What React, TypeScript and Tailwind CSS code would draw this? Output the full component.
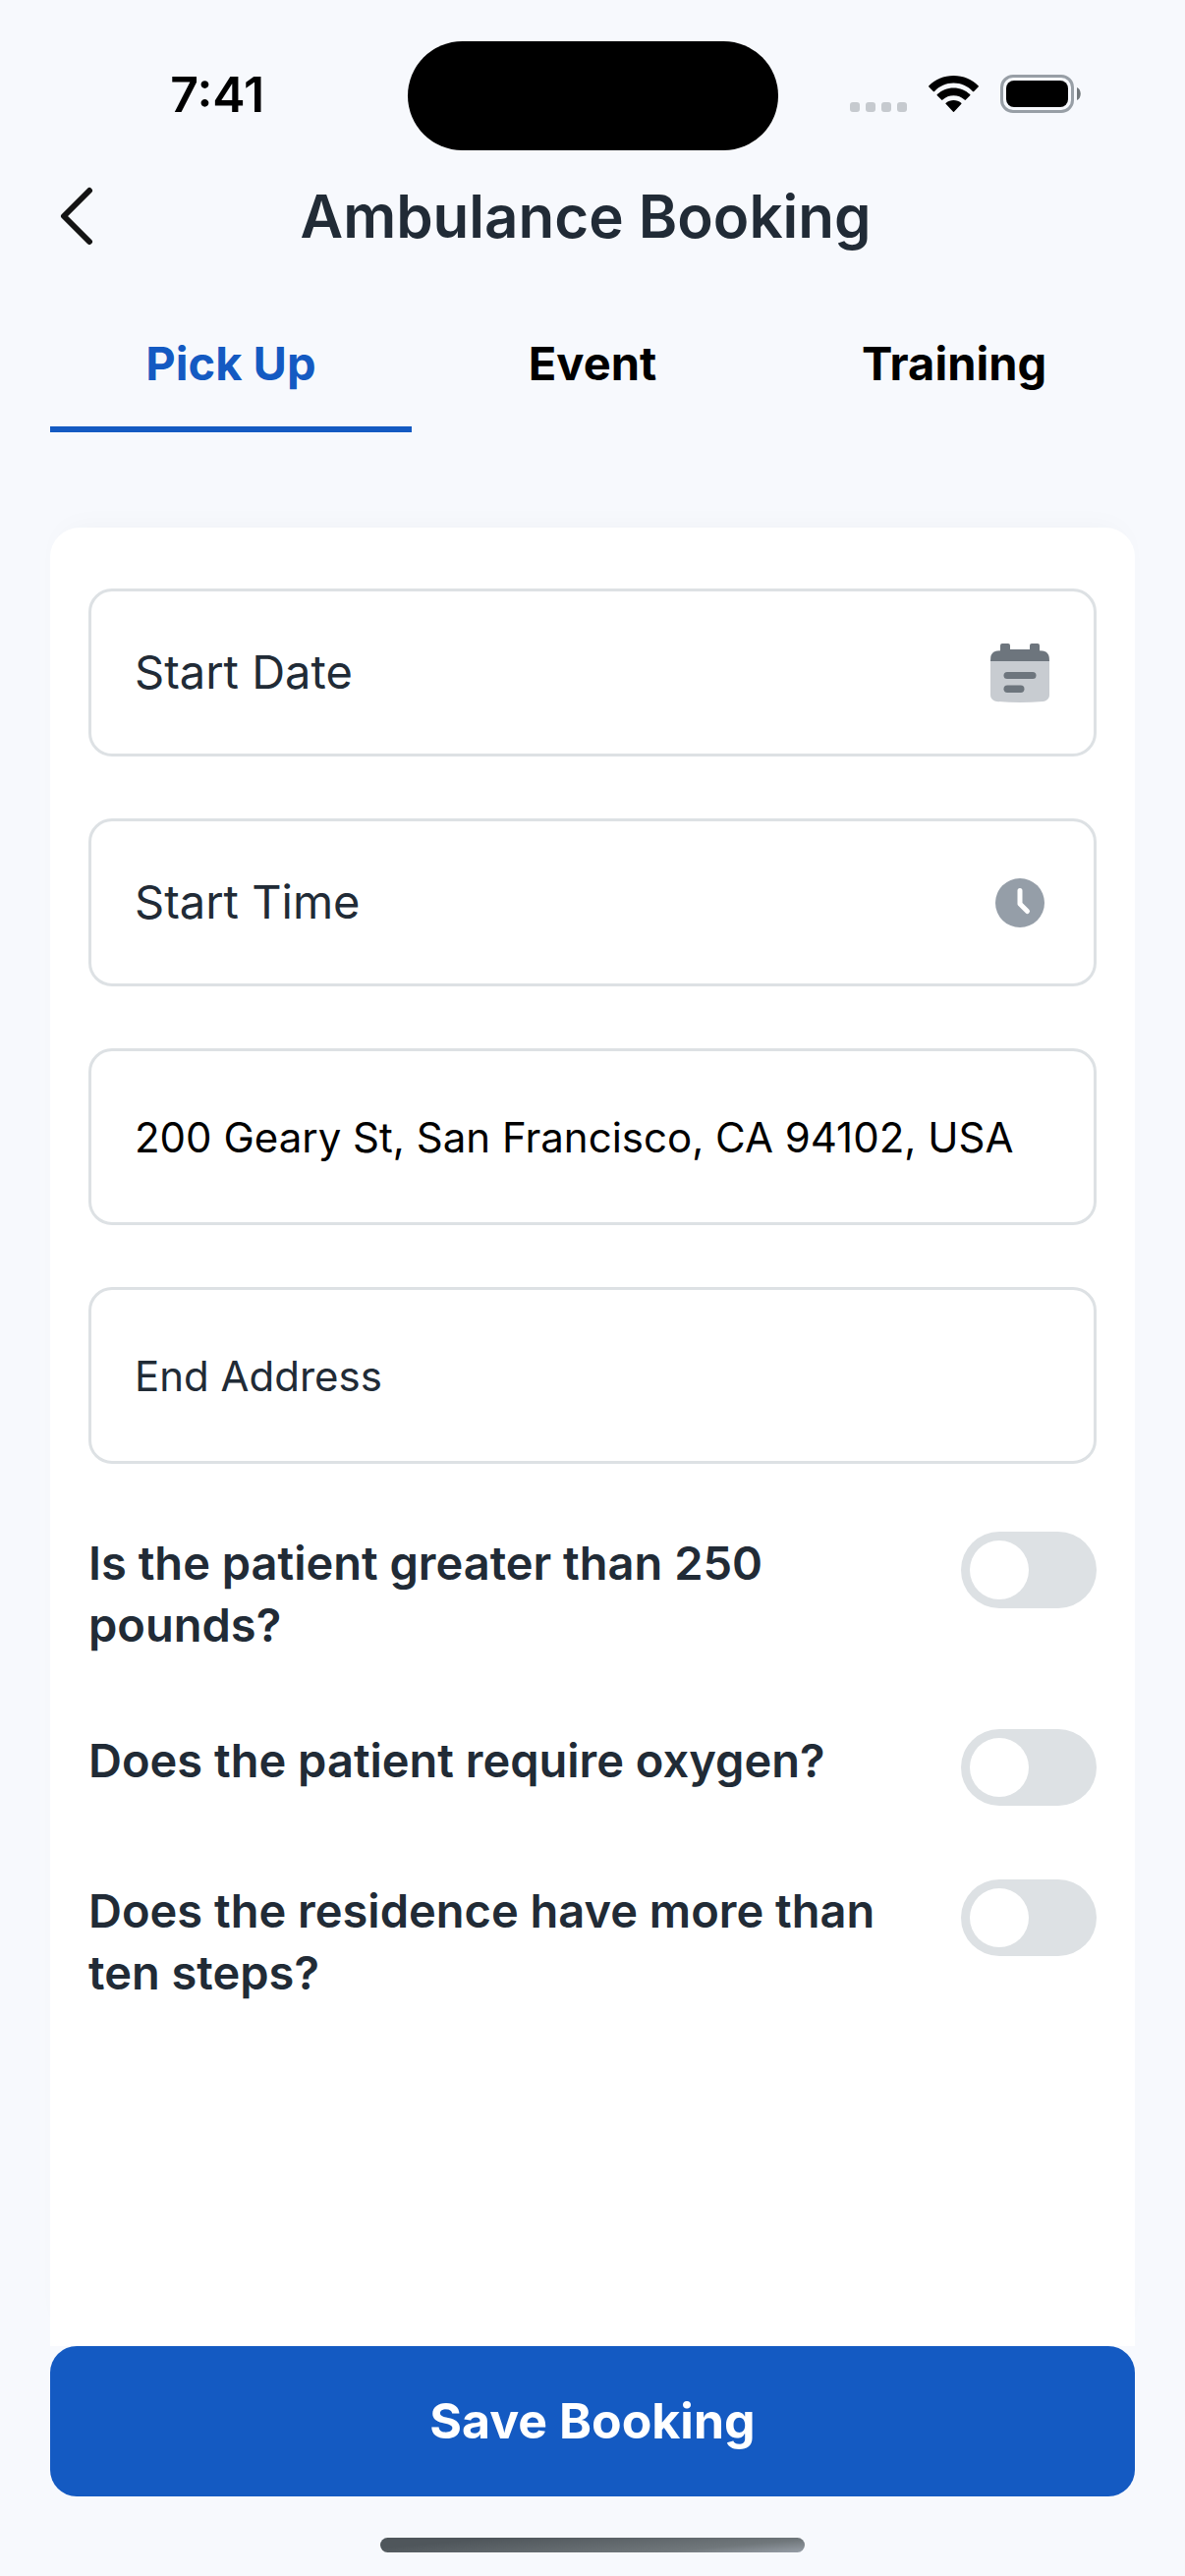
import { useState } from 'react';

const TABS = ['Pick Up', 'Event', 'Training'];

const QUESTIONS = [
  { id: 'weight', text: 'Is the patient greater than 250 pounds?' },
  { id: 'oxygen', text: 'Does the patient require oxygen?' },
  { id: 'steps', text: 'Does the residence have more than ten steps?' },
];

function WifiIcon() {
  return (
    <svg viewBox="0 0 51 37" className="h-[37px] w-[51px]" aria-hidden="true">
      <path d="M25.500 0C35.400 0 44.500 3.900 50.600 10.300a.9.9 0 0 1 0 1.300l-4.400 4.300a.9.9 0 0 1-1.300 0C39.900 10.800 33.200 7.600 25.500 7.600S11.100 10.800 6.100 15.900a.9.9 0 0 1-1.300 0L.4 11.600a.9.9 0 0 1 0-1.300C6.500 3.900 15.600 0 25.500 0Z" />
      <path d="M25.500 12.400c6.500 0 12.300 2.500 16.700 6.600a.9.9 0 0 1 0 1.300l-4.300 4.300a.9.9 0 0 1-1.300 0 16.200 16.200 0 0 0-22.200 0 .9.9 0 0 1-1.300 0l-4.300-4.300a.9.9 0 0 1 0-1.300c4.400-4.100 10.200-6.600 16.700-6.600Z" />
      <path d="M25.500 25c2.900 0 5.600 1 7.700 2.700.4.400.4 1 0 1.400l-7 7.500a.9.9 0 0 1-1.400 0l-7-7.500a.9.900 0 0 1 0-1.400C19.900 26 22.600 25 25.500 25Z" />
    </svg>
  );
}

function BatteryIcon() {
  return (
    <svg viewBox="0 0 82 39" className="h-[39px] w-[82px]" aria-hidden="true">
      <rect x="1.500" y="1.500" width="72" height="36" rx="11.500" fill="none" stroke="#989fa6" strokeWidth="3" />
      <rect x="6" y="6" width="63" height="27" rx="8" fill="#000" />
      <path d="M78 13c5 2 5 11 0 13Z" fill="#72787c" />
    </svg>
  );
}

function CalendarIcon() {
  return (
    <svg viewBox="0 0 60 60" className="size-[60px]" aria-hidden="true">
      <path d="M0 18h60v34c0 4-2.500 6.500-6.500 7-15.500 1.300-31.500 1.300-47 0C2.500 58.500 0 56 0 52Z" fill="#c8ccd1" />
      <path d="M10 2a2 2 0 0 1 2-2h6a2 2 0 0 1 2 2v4h20V2a2 2 0 0 1 2-2h6a2 2 0 0 1 2 2v5.200l3 .3c4 .4 6.500 3 6.800 7L60 18H0l.2-3.500c.3-4 2.800-6.600 6.800-7l3-.3Z" fill="#6d757d" />
      <rect x="13.500" y="29" width="33" height="7" rx="3.500" fill="#6d757d" />
      <rect x="13.500" y="42.500" width="21" height="7.500" rx="3.700" fill="#6d757d" />
    </svg>
  );
}

function ClockIcon() {
  return (
    <svg viewBox="0 0 60 60" className="size-[60px]" aria-hidden="true">
      <circle cx="30" cy="30" r="25" fill="#959ea8" />
      <path d="M30 17.500V31l7.500 7.500" fill="none" stroke="#fff" strokeWidth="5" strokeLinecap="round" strokeLinejoin="round" />
    </svg>
  );
}

const fieldBox = 'flex items-center rounded-3xl border-[3px] border-[#dde1e4] pl-11';

export default function App() {
  const [tab, setTab] = useState('Pick Up');

  return (
    <div className="flex min-h-screen flex-col bg-[#f7f9fd] font-['Inter',sans-serif] text-[#212b36]">
      <div className="grid grid-cols-[1fr_377px_1fr] items-center pt-[42px] text-black">
        <time className="justify-self-center pb-1 pl-7 text-[50px] leading-[60px] font-semibold">7:41</time>
        <div className="h-[111px] rounded-full bg-black" />
        <div className="flex items-center justify-end gap-[22px] pr-[106px] pb-1">
          <div className="flex gap-1.5 pt-[27px]">
            <i className="size-2.5 rounded-[3px] bg-[#c6cacf]" />
            <i className="size-2.5 rounded-[3px] bg-[#c6cacf]" />
            <i className="size-2.5 rounded-[3px] bg-[#c6cacf]" />
            <i className="size-2.5 rounded-[3px] bg-[#c6cacf]" />
          </div>
          <WifiIcon />
          <BatteryIcon />
        </div>
      </div>

      <header className="flex items-center px-[51px] pt-7">
        <button type="button" aria-label="Back" className="flex w-12 justify-end">
          <svg viewBox="0 0 38 60" className="h-[60px] w-[38px]" fill="none" stroke="#141414" strokeWidth="6" strokeLinecap="round" strokeLinejoin="round" aria-hidden="true">
            <path d="M30 4 4 30l26 26" />
          </svg>
        </button>
        <h1 className="flex-1 text-center text-[60px] leading-[78px] font-semibold">Ambulance Booking</h1>
        <div className="w-[62px]" />
      </header>

      <div role="tablist" className="mx-[51px] mt-[39px] grid grid-cols-3">
        {TABS.map((name) => (
          <button
            key={name}
            type="button"
            role="tab"
            aria-selected={tab === name}
            onClick={() => setTab(name)}
            className={
              tab === name
                ? 'h-[142px] border-b-[6px] border-[#145ac2] pt-2 text-[47px] font-bold text-[#145ac2]'
                : 'h-[142px] border-b-[6px] border-transparent pt-2 text-[47px] font-bold text-black'
            }
          >
            {name}
          </button>
        ))}
      </div>

      <form className="mx-[51px] mt-[97px] flex flex-1 flex-col" onSubmit={(e) => e.preventDefault()}>
        <div className="flex-1 rounded-t-[30px] bg-white px-[39px] pt-[62px] pb-20 shadow-[0_-12px_30px_-14px_rgba(33,43,54,0.04)]">
          <div className="flex flex-col gap-[63px]">
            <div className={`${fieldBox} h-[171px] pr-[45px]`}>
              <input aria-label="Start Date" placeholder="Start Date" className="min-w-0 flex-1 text-[47px] outline-none placeholder:text-[#212b36]" />
              <button type="button" aria-label="Choose date">
                <CalendarIcon />
              </button>
            </div>
            <div className={`${fieldBox} h-[171px] pr-[45px]`}>
              <input aria-label="Start Time" placeholder="Start Time" className="min-w-0 flex-1 text-[47px] outline-none placeholder:text-[#212b36]" />
              <button type="button" aria-label="Choose time">
                <ClockIcon />
              </button>
            </div>
            <div className={`${fieldBox} h-[180px] pr-6`}>
              <input aria-label="Start Address" defaultValue="200 Geary St, San Francisco, CA 94102, USA" className="min-w-0 flex-1 text-[42px] text-black outline-none" />
            </div>
            <div className={`${fieldBox} h-[180px] pr-6`}>
              <input aria-label="End Address" placeholder="End Address" className="min-w-0 flex-1 text-[42px] outline-none placeholder:text-[#212b36]" />
            </div>
          </div>

          <div className="mt-[69px] flex flex-col gap-[75px]">
            {QUESTIONS.map((q) => (
              <div key={q.id} className="flex items-start justify-between gap-[60px]">
                <label htmlFor={q.id} className="flex-1 text-[47px] leading-[63px] font-semibold">
                  {q.text}
                </label>
                <input
                  id={q.id}
                  type="checkbox"
                  role="switch"
                  className="flex h-[78px] w-[138px] shrink-0 appearance-none items-center rounded-full bg-[#dde1e4] px-[9px] before:size-[60px] before:rounded-full before:bg-white checked:justify-end checked:bg-[#145ac2]"
                />
              </div>
            ))}
          </div>
        </div>

        <button type="submit" className="h-[153px] rounded-[27px] bg-[#145ac2] text-[50px] font-bold text-white">
          Save Booking
        </button>
      </form>

      <div className="flex justify-center pt-[42px] pb-6">
        <div className="h-[15px] w-[432px] rounded-full bg-[linear-gradient(175deg,#4f565b_20%,#70777b_75%,#989fa8)]" />
      </div>
    </div>
  );
}
